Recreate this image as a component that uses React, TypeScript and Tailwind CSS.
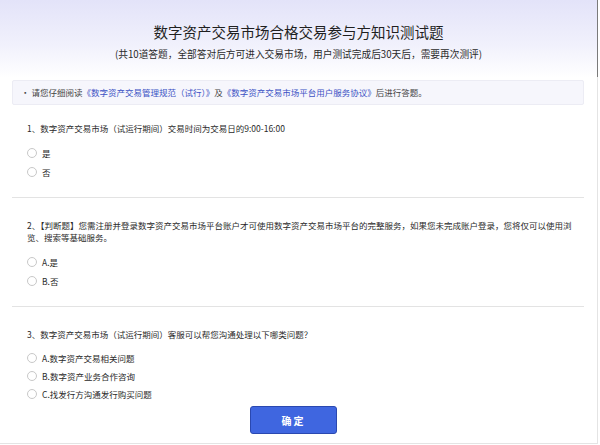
import React from "react";

const font = { fontFamily: '"Noto Sans CJK SC", "Noto Sans", sans-serif' };

function Radio({ label, tight }: { label: string; tight?: boolean }) {
  return (
    <div className={"flex items-center " + (tight ? "h-[18px]" : "h-[18.5px]")}>
      <span className="w-[10px] h-[10px] rounded-full border border-[#c8c8c8] bg-white shrink-0" />
      <span className="ml-[5px] text-[8.5px] leading-[12px] text-[#2a2a2a]">{label}</span>
    </div>
  );
}

function Question({ title, options, last, first }: { title: string; options: string[]; last?: boolean; first?: boolean }) {
  return (
    <div
      className={
        "pl-[15px] pr-[6px] " +
        (first ? "pt-[17px] " : "pt-[21px] ") +
        (last ? "" : "pb-[16px] border-b border-[#e3e3e3]")
      }
    >
      <div className="text-[8.5px] leading-[12px] text-[#2a2a2a]">{title}</div>
      <div className={"flex flex-col " + (last ? "mt-[9px]" : "mt-[10px]")}>
        {options.map((o) => (
          <Radio key={o} label={o} tight={last} />
        ))}
      </div>
    </div>
  );
}

export default function App() {
  return (
    <div className="relative w-[600px] h-[445px] overflow-hidden bg-white" style={font}>
      <div className="w-[598px] h-[444px] border-r border-b border-[#e4e4e4] flex flex-col bg-[linear-gradient(to_bottom,#e3e3f9_0px,#f1f1fc_45px,#ffffff_78px)]">
        <div className="pt-[23px] flex flex-col items-center">
          <div className="text-[14.5px] leading-[18px] text-[#1f1f1f]">数字资产交易市场合格交易参与方知识测试题</div>
          <div className="mt-[7px] text-[9.7px] leading-[12px] text-[#2a2a2a]">(共10道答题，全部答对后方可进入交易市场，用户测试完成后30天后，需要再次测评)</div>
        </div>
        <div className="mx-[12px] mt-[20px] h-[25px] w-[572px] bg-[#f6f6fc] border border-[#ececf4] rounded-[2px] flex items-center pl-[8px] text-[8.5px] text-[#444]">
          <span className="mr-[2px]">•</span>
          <span>请您仔细阅读</span>
          <span className="text-[#3b52c4]">《数字资产交易管理规范（试行）》</span>
          <span>及</span>
          <span className="text-[#3b52c4]">《数字资产交易市场平台用户服务协议》</span>
          <span>后进行答题。</span>
        </div>
        <div className="mx-[12px] w-[572px]">
          <Question first title="1、数字资产交易市场（试运行期间）交易时间为交易日的9:00-16:00" options={["是", "否"]} />
          <Question
            title="2、【判断题】您需注册并登录数字资产交易市场平台账户才可使用数字资产交易市场平台的完整服务，如果您未完成账户登录，您将仅可以使用浏览、搜索等基础服务。"
            options={["A.是", "B.否"]}
          />
          <Question
            title="3、数字资产交易市场（试运行期间）客服可以帮您沟通处理以下哪类问题？"
            options={["A.数字资产交易相关问题", "B.数字资产业务合作咨询", "C.找发行方沟通发行购买问题"]}
            last
          />
        </div>
        <div className="flex justify-center mt-[3px] pr-[10px]">
          <button className="w-[87px] h-[28px] rounded-[3px] bg-[#3f66e0] border border-[#2a48b0] text-white text-[10px] font-bold tracking-[2px]">
            确定
          </button>
        </div>
      </div>
      <div className="absolute right-[2px] top-0 w-[1px] h-[77px] bg-[#7a7a7a]" />
    </div>
  );
}
